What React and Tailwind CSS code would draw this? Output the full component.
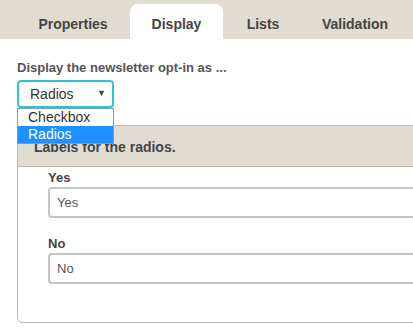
const Field = ({ label, value }) => (
    <div className="mb-[18px]">
        <div className="text-[13px] font-bold text-[#444] leading-[15px] mb-[2px]">{label}</div>
        <div className="h-[31px] border-2 border-[#c4c4c4] rounded-[4px] flex items-center px-[7px] text-[13px] text-[#555]">
            {value}
        </div>
    </div>
);

const App = () => {
    return (
        <div className="w-[413px] h-[336px] overflow-hidden bg-white font-['Liberation_Sans',Arial,sans-serif]">
            <div className="h-[39px] bg-[#e0dcd2] flex items-end">
                <div className="flex text-[14px] font-bold text-[#444]">
                    <div className="w-[130px] h-[35px] flex items-center justify-center pl-[16px] pt-[5px]">Properties</div>
                    <div className="w-[93px] h-[35px] bg-white rounded-t-[8px] flex items-center justify-center pt-[5px]">Display</div>
                    <div className="w-[80px] h-[35px] flex items-center justify-center pt-[5px]">Lists</div>
                    <div className="w-[104px] h-[35px] flex items-center justify-center pt-[5px]">Validation</div>
                </div>
            </div>

            <div className="pl-[17px] pt-[21px]">
                <div className="text-[13px] font-bold text-[#555] leading-[16px] mb-[4px]">Display the newsletter opt-in as ...</div>

                <div className="relative">
                    <div className="w-[97px] h-[28px] border-2 border-[#2ec4d6] rounded-[4px] flex items-center justify-between pl-[11px] pr-[6px] text-[14px] text-[#333]">
                        <span>Radios</span>
                        <span className="text-[9px] text-[#444]">▼</span>
                    </div>

                    <div className="absolute left-0 top-[28px] z-10 w-[97px] border border-[#7f9db9] bg-white text-[14px] leading-[16px]">
                        <div className="px-[10px] h-[17px] text-[#333]">Checkbox</div>
                        <div className="px-[10px] h-[17px] bg-[#1e90ff] text-white">Radios</div>
                    </div>

                    <div className="mt-[17px] w-[430px] border border-[#bcb8ae] rounded-b-[6px] h-[198px]">
                        <div className="h-[41px] bg-[#e0dcd2] border-b border-[#bcb8ae] flex items-center pl-[16px] pt-[2px] text-[14px] font-bold text-[#444]">
                            Labels for the radios.
                        </div>
                        <div className="pl-[30px] pt-[3px]">
                            <Field label="Yes" value="Yes" />
                            <Field label="No" value="No" />
                        </div>
                    </div>
                </div>
            </div>
        </div>
    );
};

export default App;
